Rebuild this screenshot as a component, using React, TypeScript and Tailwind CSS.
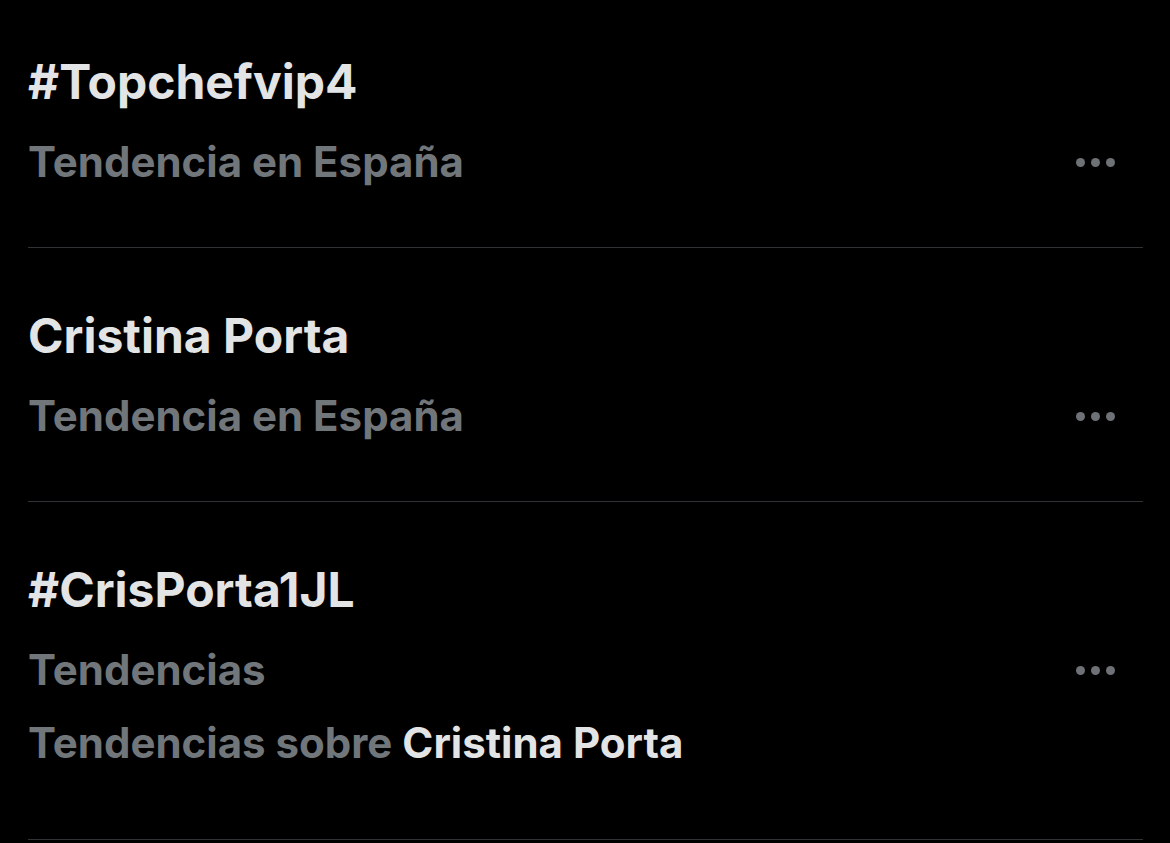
import React from "react";

function Dots() {
  return (
    <div className="flex items-center gap-[6px]">
      <span className="block h-[9px] w-[9px] rounded-full bg-[#6e7175]" />
      <span className="block h-[9px] w-[9px] rounded-full bg-[#6e7175]" />
      <span className="block h-[9px] w-[9px] rounded-full bg-[#6e7175]" />
    </div>
  );
}

function Row({
  title,
  subtitle,
  extra,
  className,
}: {
  title: string;
  subtitle: string;
  extra?: React.ReactNode;
  className?: string;
}) {
  return (
    <div className={"border-b border-[#2f3336] " + (className ?? "")}>
      <div className="flex flex-col">
        <div className="text-[48px] leading-[60px] font-bold text-[#e3e4e5]">
          {title}
        </div>
        <div className="mt-[20px] flex items-center justify-between">
          <div className="text-[42px] leading-[60px] font-bold text-[#71767b]">
            {subtitle}
          </div>
          <div className="mr-[28px]">
            <Dots />
          </div>
        </div>
        {extra}
      </div>
    </div>
  );
}

export default function App() {
  return (
    <div
      className="h-[843px] w-[1170px] overflow-hidden bg-black pl-[28px] pr-[27px]"
      style={{ fontFamily: "Inter, 'Noto Sans', sans-serif" }}
    >
      <div className="-mt-[6px]">
        <Row title="#Topchefvip4" subtitle="Tendencia en España" className="pt-[58px] pb-[55px]" />
        <Row title="Cristina Porta" subtitle="Tendencia en España" className="pt-[58px] pb-[55px]" />
        <Row
          title="#CrisPorta1JL"
          subtitle="Tendencias"
          className="pt-[58px] pb-[66px]"
          extra={
            <div className="mt-[13px] text-[42px] leading-[60px] font-bold text-[#71767b]">
              Tendencias sobre <span className="text-[#e3e4e5]">Cristina Porta</span>
            </div>
          }
        />
      </div>
    </div>
  );
}
